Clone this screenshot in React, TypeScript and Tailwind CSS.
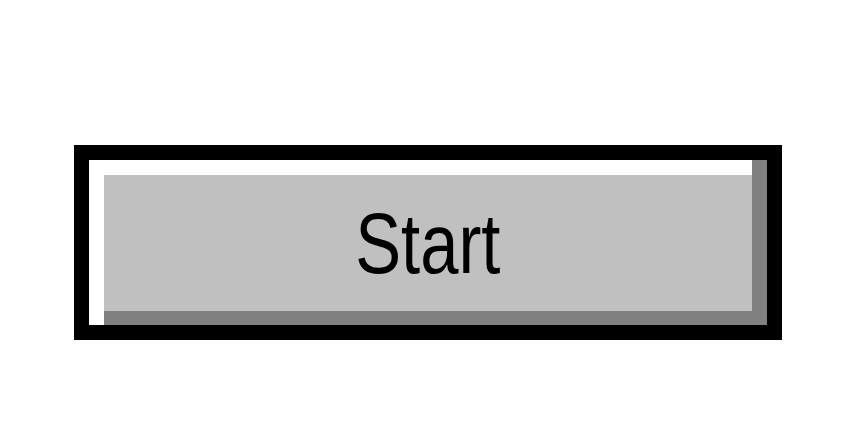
export default function App() {
  return (
    <div className="w-[856px] h-[443px] bg-white flex justify-center pt-[145px]">
      <div className="w-[708px] h-[195px] bg-black p-[15px] flex">
        <div className="w-[15px] h-full bg-white" />
        <div className="flex-1 flex flex-col">
          <div className="h-[15px] bg-white" />
          <div className="flex-1 bg-[#c0c0c0] flex items-center justify-center">
            <span
              className="text-black text-[86px] leading-none scale-x-[0.8] inline-block"
              style={{ fontFamily: '"Liberation Sans", Arial, sans-serif' }}
            >
              Start
            </span>
          </div>
          <div className="h-[14px] bg-[#808080]" />
        </div>
        <div className="w-[15px] h-full bg-[#808080]" />
      </div>
    </div>
  );
}
